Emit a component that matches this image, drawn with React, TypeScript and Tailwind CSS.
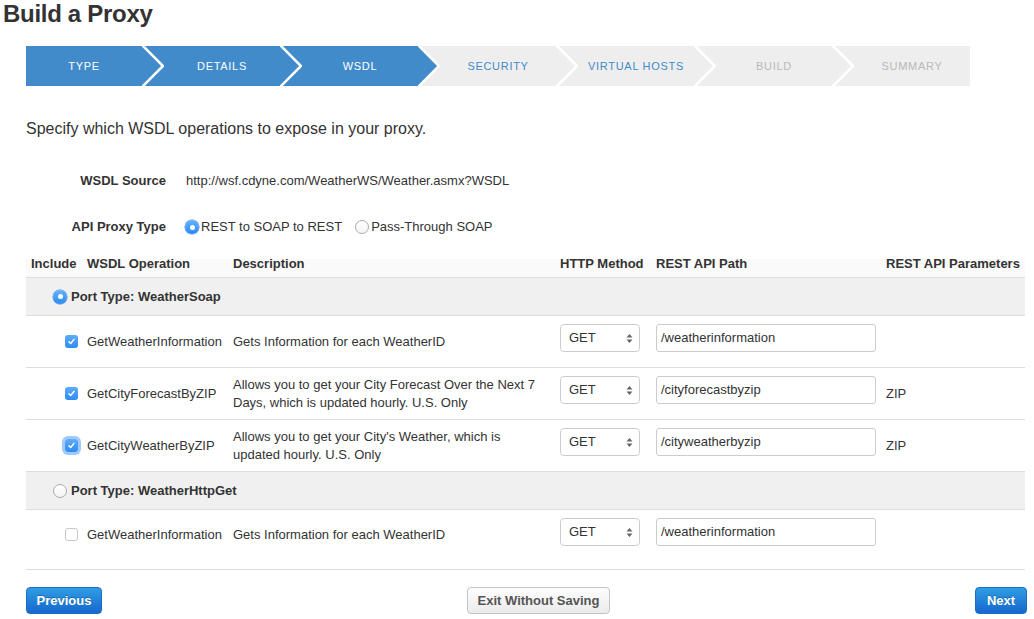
import React from "react";

type StepState = "done" | "next" | "off";
const steps: { label: string; s: StepState }[] = [
  { label: "TYPE", s: "done" },
  { label: "DETAILS", s: "done" },
  { label: "WSDL", s: "done" },
  { label: "SECURITY", s: "next" },
  { label: "VIRTUAL HOSTS", s: "next" },
  { label: "BUILD", s: "off" },
  { label: "SUMMARY", s: "off" },
];

const stepCls: Record<StepState, string> = {
  done: "bg-[#428bca] text-white",
  next: "bg-[#eeeeee] text-[#428bca]",
  off: "bg-[#eeeeee] text-[#b9b9b9]",
};
const bgCls: Record<StepState, string> = {
  done: "bg-[#428bca]",
  next: "bg-[#eeeeee]",
  off: "bg-[#eeeeee]",
};
const fillOf: Record<StepState, string> = {
  done: "#428bca",
  next: "#eeeeee",
  off: "#eeeeee",
};

function Chevron({ prev, next }: { prev: StepState; next: StepState }) {
  return (
    <div className={`w-[22px] h-full shrink-0 ${bgCls[next]}`}>
      <svg width="22" height="40" viewBox="0 0 22 40" className="block">
        <polygon points="0,0 21,20 0,40" fill={fillOf[prev]} />
        <polyline points="0,-1 21,20 0,41" fill="none" stroke="#ffffff" strokeWidth="2.6" />
      </svg>
    </div>
  );
}

function Wizard() {
  return (
    <div className="ml-[26px] mt-[18px] flex h-[40px] w-[944px]">
      {steps.map((st, i) => (
        <React.Fragment key={st.label}>
          {i > 0 && <Chevron prev={steps[i - 1].s} next={st.s} />}
          <div
            className={`flex flex-1 items-center justify-center text-[11px] tracking-[0.7px] ${stepCls[st.s]}`}
          >
            {st.label}
          </div>
        </React.Fragment>
      ))}
    </div>
  );
}

function Radio({ checked }: { checked: boolean }) {
  if (checked)
    return (
      <span className="flex h-[14px] w-[14px] shrink-0 items-center justify-center rounded-full bg-[linear-gradient(#67b2fd,#2a8af4)] shadow-[0_0_0_0.5px_#2a7fe0]">
        <span className="block h-[5px] w-[5px] rounded-full bg-white" />
      </span>
    );
  return (
    <span className="block h-[14px] w-[14px] shrink-0 rounded-full border border-[#aaaaaa] bg-[linear-gradient(#ffffff,#f4f4f4)]" />
  );
}

function Check({ checked, focus }: { checked: boolean; focus?: boolean }) {
  if (!checked)
    return <span className="block h-[13px] w-[13px] rounded-[3px] border border-[#c9c9c9] bg-white" />;
  return (
    <span
      className={`flex h-[13px] w-[13px] items-center justify-center rounded-[3px] bg-[linear-gradient(#5eabfd,#2d8cf4)] ${
        focus ? "shadow-[0_0_0_3px_rgba(96,165,250,0.6)]" : ""
      }`}
    >
      <svg width="9" height="9" viewBox="0 0 9 9">
        <path
          d="M2 4.9 L3.7 6.5 L7 2.4"
          stroke="#ffffff"
          strokeWidth="1.5"
          fill="none"
          strokeLinecap="round"
          strokeLinejoin="round"
        />
      </svg>
    </span>
  );
}

function Select() {
  return (
    <div className="flex h-[28px] w-[80px] items-center justify-between rounded-[4px] border border-[#cccccc] bg-white pl-[8px] pr-[6px] text-[13px] text-[#333]">
      <span>GET</span>
      <svg width="7" height="11" viewBox="0 0 7 11">
        <polygon points="3.5,1 6.5,4.5 0.5,4.5" fill="#666" />
        <polygon points="0.5,6.5 6.5,6.5 3.5,10" fill="#666" />
      </svg>
    </div>
  );
}

function PathInput({ value }: { value: string }) {
  return (
    <div className="flex h-[28px] w-[220px] items-center rounded-[3px] border border-[#cccccc] bg-white pl-[4px] text-[13px] text-[#333]">
      {value}
    </div>
  );
}

const gridCols = "grid grid-cols-[56px_146px_327px_96px_230px_144px]";

function OpRow({
  checked,
  focus,
  name,
  desc,
  path,
  params,
  tall,
}: {
  checked: boolean;
  focus?: boolean;
  name: string;
  desc: string;
  path: string;
  params?: string;
  tall?: boolean;
}) {
  return (
    <div
      className={`${gridCols} items-center border-b border-[#dddddd] ${
        tall ? "h-[60px] pb-[10px]" : "h-[52px]"
      }`}
    >
      <div className="pl-[39px]">
        <Check checked={checked} focus={focus} />
      </div>
      <div className="pl-[5px]">{name}</div>
      <div className="pl-[5px] pr-[10px] leading-[18px]">{desc}</div>
      <div className="self-start pl-[5px] pt-[8px]">
        <Select />
      </div>
      <div className="self-start pl-[5px] pt-[8px]">
        <PathInput value={path} />
      </div>
      <div className="pl-[5px]">{params ?? ""}</div>
    </div>
  );
}

function PortRow({ checked, label }: { checked: boolean; label: string }) {
  return (
    <div className="flex h-[38px] items-center gap-[4px] border-b border-[#dddddd] bg-[#f0f0f0] pl-[27px] font-bold">
      <Radio checked={checked} />
      <span>{label}</span>
    </div>
  );
}

export default function App() {
  return (
    <div className="relative h-[619px] w-[1034px] overflow-hidden bg-white font-['Liberation_Sans',Arial,sans-serif] text-[13px] text-[#333333]">
      <h1 className="pl-[3px] text-[24px] font-bold leading-[28px] tracking-[-0.3px] text-[#333333]">
        Build a Proxy
      </h1>

      <Wizard />

      <p className="ml-[26px] mt-[33px] text-[16px] leading-[20px]">
        Specify which WSDL operations to expose in your proxy.
      </p>

      <div className="ml-[26px] mt-[32px] flex h-[20px] items-center">
        <div className="w-[140px] text-right font-bold">WSDL Source</div>
        <div className="ml-[20px]">http://wsf.cdyne.com/WeatherWS/Weather.asmx?WSDL</div>
      </div>

      <div className="ml-[26px] mt-[26px] flex h-[20px] items-center">
        <div className="w-[140px] text-right font-bold">API Proxy Type</div>
        <div className="ml-[19px] flex items-center gap-[2px]">
          <Radio checked />
          <span>REST to SOAP to REST</span>
        </div>
        <div className="ml-[13px] flex items-center gap-[2px]">
          <Radio checked={false} />
          <span>Pass-Through SOAP</span>
        </div>
      </div>

      <div className="ml-[26px] mt-[18px] w-[999px]">
        <div
          className={`${gridCols} h-[23px] border-b border-[#dddddd] bg-[linear-gradient(to_bottom,#ffffff_4px,#fafafa_4px)] pt-[1px] font-bold leading-[16px]`}
        >
          <div className="pl-[5px]">Include</div>
          <div className="pl-[5px]">WSDL Operation</div>
          <div className="pl-[5px]">Description</div>
          <div className="pl-[5px]">HTTP Method</div>
          <div className="pl-[5px]">REST API Path</div>
          <div className="pl-[5px]">REST API Parameters</div>
        </div>

        <PortRow checked label="Port Type: WeatherSoap" />
        <OpRow
          checked
          name="GetWeatherInformation"
          desc="Gets Information for each WeatherID"
          path="/weatherinformation"
        />
        <OpRow
          checked
          name="GetCityForecastByZIP"
          desc="Allows you to get your City Forecast Over the Next 7 Days, which is updated hourly. U.S. Only"
          path="/cityforecastbyzip"
          params="ZIP"
        />
        <OpRow
          checked
          focus
          name="GetCityWeatherByZIP"
          desc="Allows you to get your City's Weather, which is updated hourly. U.S. Only"
          path="/cityweatherbyzip"
          params="ZIP"
        />
        <PortRow checked={false} label="Port Type: WeatherHttpGet" />
        <OpRow
          checked={false}
          tall
          name="GetWeatherInformation"
          desc="Gets Information for each WeatherID"
          path="/weatherinformation"
        />
      </div>

      <div className="ml-[26px] mt-[17px] flex w-[1001px] items-center">
        <button className="h-[27px] w-[76px] rounded-[4px] border border-[#1b6cc4] bg-[linear-gradient(#2f9de4,#1667cc)] text-[13px] font-bold text-white [text-shadow:0_-1px_0_rgba(0,0,0,0.25)]">
          Previous
        </button>
        <button className="ml-[365px] h-[27px] w-[143px] rounded-[4px] border border-[#c4c4c4] bg-[linear-gradient(#fdfdfd,#ebebeb)] text-[13px] font-bold text-[#555555]">
          Exit Without Saving
        </button>
        <button className="ml-auto h-[27px] w-[52px] rounded-[4px] border border-[#1b6cc4] bg-[linear-gradient(#2f9de4,#1667cc)] text-[13px] font-bold text-white [text-shadow:0_-1px_0_rgba(0,0,0,0.25)]">
          Next
        </button>
      </div>
    </div>
  );
}
